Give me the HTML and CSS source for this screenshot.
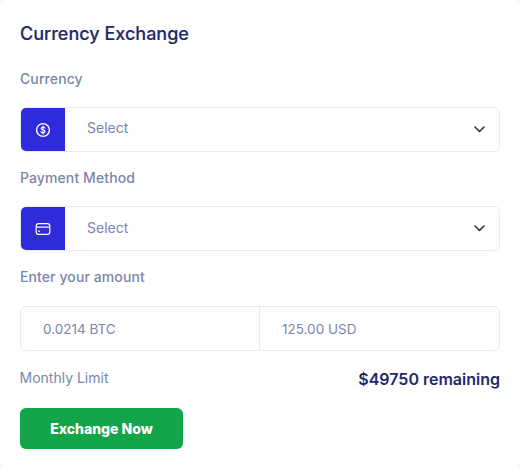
FILE: index.html
```html
<!DOCTYPE html>
<html lang="en">
<head>
<meta charset="utf-8">
<title>Currency Exchange</title>
<link rel="stylesheet" href="styles.css">
</head>
<body>
<main class="card">
  <h2 class="title">Currency Exchange</h2>
  <label class="label label-first">Currency</label>
  <div class="select">
    <span class="addon">
      <svg width="16" height="16" viewBox="0 0 16 16" fill="none"><circle cx="8" cy="8" r="6.4" stroke="#fff" stroke-width="1.4"/><path d="M10 6.1C9.7 5.4 9 5 8 5 6.9 5 6.1 5.5 6.1 6.4c0 1.9 3.9.9 3.9 3 0 .9-.9 1.5-2 1.5-1 0-1.8-.5-2.1-1.2M8 4v8" stroke="#fff" stroke-width="1.1" stroke-linecap="round"/></svg>
    </span>
    <span class="value">Select</span>
    <svg class="chev" width="11" height="7" viewBox="0 0 11 7" fill="none"><path d="M1 1l4.5 4.5L10 1" stroke="#2b3350" stroke-width="1.6" stroke-linecap="round" stroke-linejoin="round"/></svg>
  </div>
  <label class="label">Payment Method</label>
  <div class="select">
    <span class="addon">
      <svg width="16" height="16" viewBox="0 0 16 16" fill="none"><rect x="1.2" y="2.7" width="13.6" height="10.6" rx="2.4" stroke="#fff" stroke-width="1.2"/><path d="M1.5 6.2h13" stroke="#fff" stroke-width="1.2"/><rect x="3.3" y="9.6" width="1.6" height="1.4" fill="#fff"/></svg>
    </span>
    <span class="value">Select</span>
    <svg class="chev" width="11" height="7" viewBox="0 0 11 7" fill="none"><path d="M1 1l4.5 4.5L10 1" stroke="#2b3350" stroke-width="1.6" stroke-linecap="round" stroke-linejoin="round"/></svg>
  </div>
  <label class="label label-amount">Enter your amount</label>
  <div class="amounts">
    <span class="amount amount-left">0.0214 BTC</span>
    <span class="amount amount-right">125.00 USD</span>
  </div>
  <div class="limit">
    <span class="limit-label">Monthly Limit</span>
    <span class="limit-value">$49750 remaining</span>
  </div>
  <button class="btn" type="button">Exchange Now</button>
</main>
</body>
</html>
```
FILE: styles.css
```css
* { box-sizing: border-box; }
html, body { margin: 0; height: 100%; }
body { background: #f7f8fb; font-family: "Inter", "Liberation Sans", sans-serif; }
.card {
  width: 520px;
  height: 469px;
  background: #fff;
  border-radius: 8px;
  padding: 22px 20px 0;
  display: flex;
  flex-direction: column;
  align-items: stretch;
}
.title { margin: 0; font-size: 18px; line-height: 24px; font-weight: 500; color: #1e2a6b; -webkit-text-stroke: 0.15px #1e2a6b; }
.label { font-size: 14px; line-height: 18px; font-weight: 500; letter-spacing: 0.1px; color: #7a86ab; margin: 0 0 19px; }
.label-first { margin-top: 24px; }
.label-amount { margin-bottom: 20px; }
.select {
  height: 45px;
  border: 1px solid #e8ebf3;
  border-radius: 6px;
  display: flex;
  align-items: center;
  margin-bottom: 17px;
  overflow: hidden;
}
.addon { width: 44px; height: 100%; background: #2f2adb; display: flex; align-items: center; justify-content: center; flex: none; }
.value { flex: 1; padding: 0 0 4px 22px; font-size: 14px; color: #7a86ab; }
.select + .label + .select .value { padding-bottom: 2px; }
.chev { margin-right: 14px; flex: none; }
.amounts { display: flex; height: 45px; border: 1px solid #e8ebf3; border-radius: 6px; }
.amount { display: flex; align-items: center; padding-left: 22px; font-size: 13.5px; color: #7a86ab; }
.amount-left { width: 238px; flex: none; }
.amount-right { flex: 1; padding-left: 22px; border-left: 1px solid #e8ebf3; }
.limit { display: flex; justify-content: space-between; align-items: center; margin-top: 15px; height: 26px; }
.limit-label { font-size: 14px; color: #7a86ab; position: relative; top: -2px; left: -0.5px; }
.limit-value { font-size: 16px; font-weight: 600; color: #1e2a6b; }
.btn {
  margin-top: 16px;
  width: 163px;
  height: 41px;
  background: #12a54a;
  border: 0;
  border-radius: 6px;
  color: #fff;
  font: 800 14px "Inter", "Liberation Sans", sans-serif;
}
```
